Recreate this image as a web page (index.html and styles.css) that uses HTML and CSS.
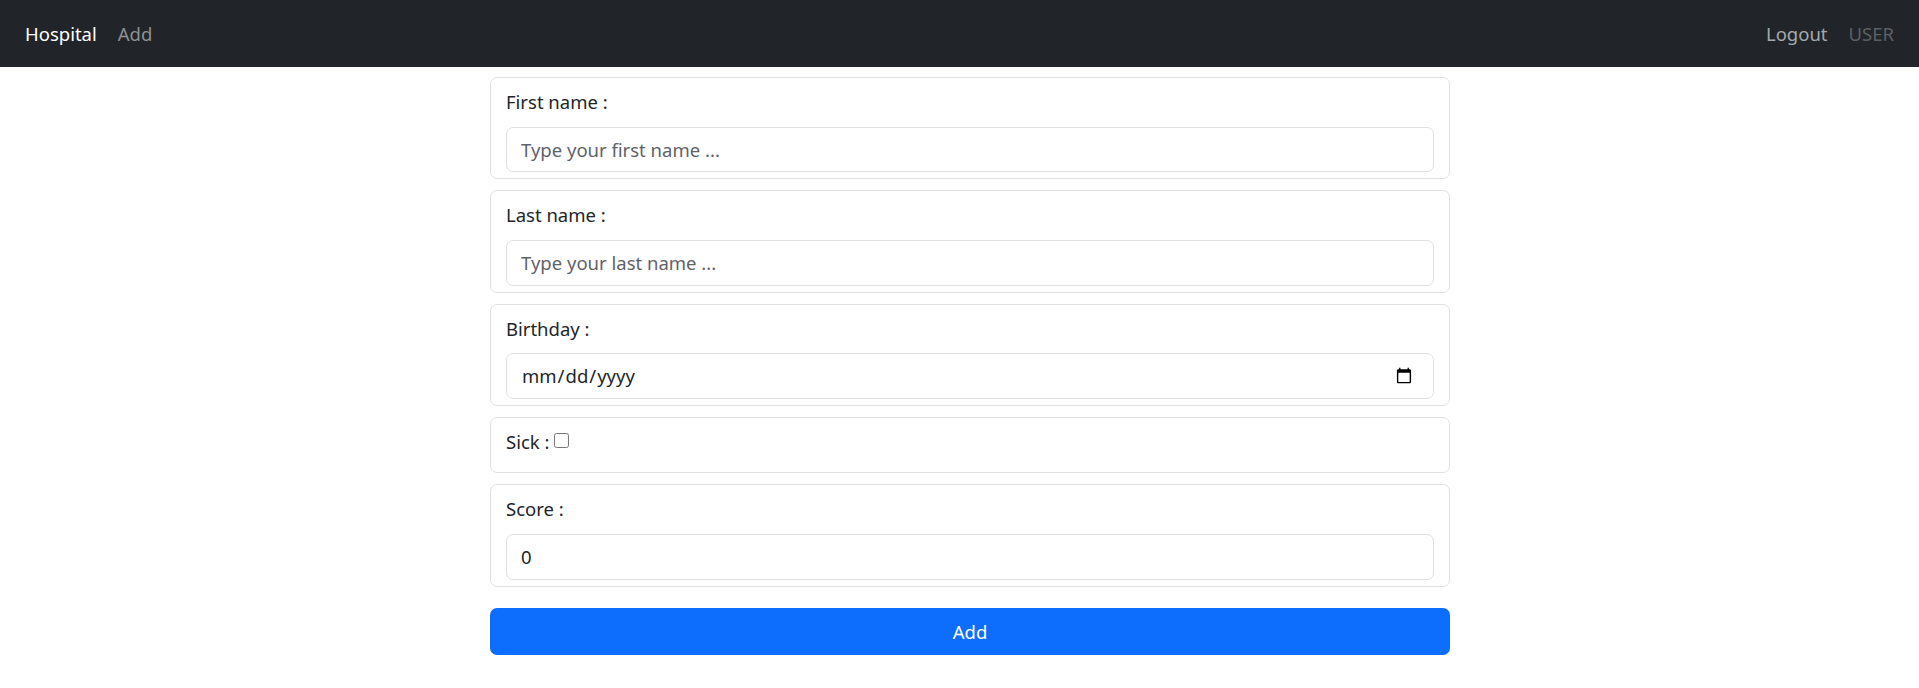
FILE: index.html
```html
<!DOCTYPE html>
<html lang="en">
<head>
<meta charset="utf-8">
<title>Hospital</title>
<link rel="stylesheet" href="styles.css">
</head>
<body>
<nav class="navbar">
  <div class="nav-group">
    <a class="nav-brand" href="#">Hospital</a>
    <a class="nav-link" href="#">Add</a>
  </div>
  <div class="nav-group">
    <a class="nav-link nav-logout" href="#">Logout</a>
    <span class="nav-user">USER</span>
  </div>
</nav>
<main class="page">
  <form class="form">
    <div class="field-card">
      <label class="field-label" for="first">First name :</label>
      <input class="field-input" id="first" type="text" placeholder="Type your first name ...">
    </div>
    <div class="field-card">
      <label class="field-label" for="last">Last name :</label>
      <input class="field-input" id="last" type="text" placeholder="Type your last name ...">
    </div>
    <div class="field-card">
      <label class="field-label" for="birthday">Birthday :</label>
      <input class="field-input" id="birthday" type="date">
    </div>
    <div class="field-card field-card-check">
      <label class="field-label" for="sick">Sick :<input class="field-check" id="sick" type="checkbox"></label>
    </div>
    <div class="field-card">
      <label class="field-label" for="score">Score :</label>
      <input class="field-input" id="score" type="number" value="0">
    </div>
    <button class="btn-add" type="button">Add</button>
  </form>
</main>
</body>
</html>
```

FILE: styles.css
```css
* {
  box-sizing: border-box;
}

body {
  margin: 0;
  font-family: "Noto Sans", "Open Sans", sans-serif;
  font-size: 18.5px;
  line-height: 1.5;
  color: #212529;
  background: #fff;
}

.navbar {
  height: 67px;
  background: #212529;
  display: flex;
  align-items: center;
  justify-content: space-between;
  padding: 0 25px 0 25px;
}

.nav-group {
  display: flex;
  align-items: center;
  gap: 21px;
}

.nav-brand,
.nav-link {
  text-decoration: none;
}

.nav-brand {
  color: #fff;
}

.nav-link {
  color: #8e9092;
}

.nav-logout {
  color: #a6a9ac;
}

.nav-user {
  color: #5c5f63;
}

.page {
  display: flex;
  justify-content: center;
  padding: 10px 0 0 21px;
}

.form {
  width: 960px;
  display: flex;
  flex-direction: column;
  gap: 11.2px;
}

.field-card {
  border: 1px solid #dfe2e5;
  border-radius: 7px;
  padding: 9px 15px 6px;
  display: flex;
  flex-direction: column;
  gap: 10.6px;
}

.field-card-check {
  padding-bottom: 16px;
}

.field-label {
  display: block;
  line-height: 29px;
  height: 29px;
}

.field-input {
  display: block;
  width: 100%;
  height: 45.6px;
  border: 1px solid #dee2e6;
  border-radius: 7px;
  padding: 0 18px 0 14px;
  font: inherit;
  color: #212529;
  background: #fff;
}

.field-input::placeholder {
  color: #5f6368;
}

.field-check {
  width: 15px;
  height: 15px;
  margin: 6px 0 0 5px;
  vertical-align: top;
}

.btn-add {
  margin-top: 10.5px;
  height: 47px;
  border: none;
  border-radius: 7px;
  background: #0d6efd;
  color: #fff;
  font: inherit;
}
```
